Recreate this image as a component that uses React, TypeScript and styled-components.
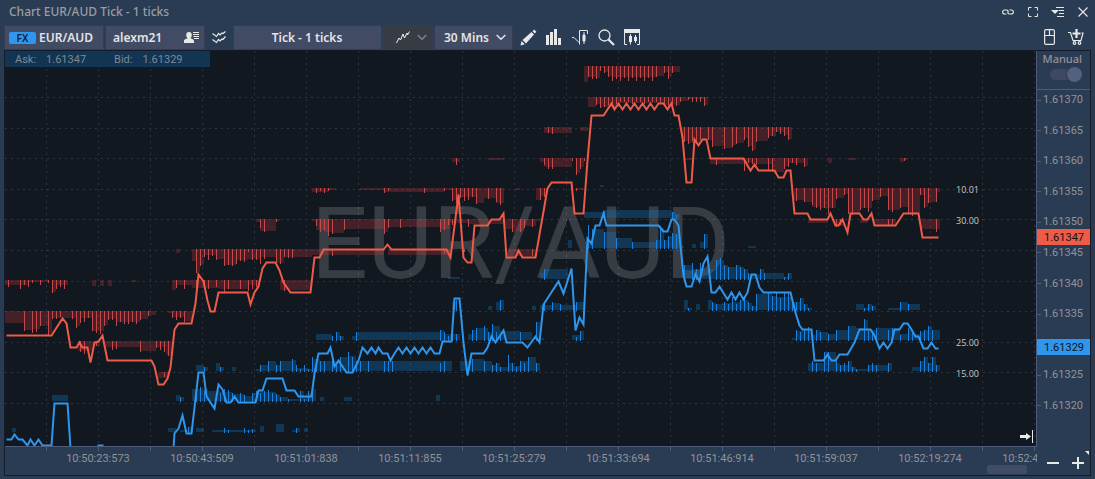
import React from "react";
import styled, { createGlobalStyle } from "styled-components";

const GlobalStyle = createGlobalStyle`
  *, *::before, *::after { box-sizing: border-box; }
  html, body, #root { height: 100%; margin: 0; }
  body {
    background: #2a3b54;
    color: #e4e4e4;
    font-family: "Noto Sans", "Open Sans", sans-serif;
    font-size: 12px;
    overflow: hidden;
  }
  button, select { font: inherit; color: inherit; }
`;

const ui = {
  panel: "#2a3b54",
  canvas: "#111820",
  control: "#424b64",
  controlEdge: "#353c54",
  axisLine: "#4f5b78",
  muted: "#929397",
  ask: "#ee5b47",
  bid: "#2e96ec",
};

/* ---------- depth bands: fills are "from-to:height", ticks are "x:height" ---------- */

type Band = { y: number; fills: string; ticks?: string };

const askBands: Band[] = [
  {
    y: 66,
    fills: "584-588:16 588-596:11 596-600:12 600-604:2 604-608:6 608-612:10 612-640:11 640-656:11 656-664:10 664-668:6 668-672:10 672-680:6",
    ticks: "588:11 592:13 596:13 600:5 604:7 608:11 612:15 616:13 620:15 624:12 628:15 632:12 636:15 640:12 644:15 648:12 652:15 656:11 664:7 668:13 672:7",
  },
  {
    y: 97,
    fills: "588-596:10 596-600:7 600-620:10 620-664:6 664-680:8 680-688:4 688-704:2 704-708:8",
    ticks: "596:8 600:11 604:10 608:8 612:7 616:7 620:5 624:5 628:5 632:7 636:5 640:5 644:7 648:5 652:5 656:5 660:5 664:7 668:9 672:7 676:9 680:5 688:3 692:5 696:5 700:5 704:9",
  },
  {
    y: 127,
    fills: "544-572:6 580-588:4 682-688:14 688-700:16 700-708:12 708-712:13 712-724:19 724-732:21 732-736:18 736-744:16 744-748:11 748-752:19 752-756:23 756-768:14 768-776:9 776-784:5 784-788:8 788-792:12",
    ticks: "548:6 552:7 684:15 688:17 692:14 696:14 700:13 708:13 712:20 724:22 732:20 736:17 744:13 748:20 752:24 756:15 768:11 772:9 776:5 780:7 784:9 788:13",
  },
  {
    y: 158,
    fills: "452-460:4 488-504:2 540-544:4 544-572:9 576-580:15 580-584:9 684-692:2 710-744:6 744-756:5 756-772:6 772-784:14 784-788:8 788-804:5 804-808:8 828-832:5 848-856:2 900-904:4 904-908:2",
    ticks: "456:7 544:7 548:11 552:11 572:3 576:17 580:11 584:3 716:7 744:13 748:5 752:6 756:7 768:12 772:14 784:11 788:9 792:5 796:7 804:9 904:3",
  },
  {
    y: 188,
    fills: "312-328:4 328-336:2 360-384:2 384-444:4 444-452:2 452-460:12 460-476:9 476-484:15 484-496:10 496-504:15 516-520:2 536-540:12 540-546:8 576-584:2 794-804:12 804-812:14 812-820:19 820-836:20 836-844:10 844-848:6 848-860:25 860-872:20 872-880:12 880-888:8 888-900:22 900-908:19 908-920:25 920-924:7 924-928:19 928-936:14 936-940:4",
    ticks: "316:5 320:3 324:5 328:3 384:5 388:3 424:5 444:3 452:13 456:15 460:10 464:13 468:12 472:9 476:16 488:11 496:14 500:17 540:12 544:9 576:3 796:13 804:14 812:17 816:20 820:22 824:20 828:26 832:20 836:11 844:7 848:26 852:27 860:22 864:20 868:24 872:13 880:9 888:22 892:24 900:20 908:25 912:28 920:7 924:20 928:15 936:14",
  },
  {
    y: 219,
    fills: "256-260:3 260-276:12 276-280:2 312-316:2 316-324:11 324-332:13 332-344:14 344-384:10 384-388:13 388-440:8 440-450:10 450-468:4 468-504:5 504-512:10 512-524:12 524-536:7 536-540:2 808-828:4 834-844:7 860-868:4 874-896:7 920-940:10",
    ticks: "260:9 264:13 276:3 316:7 320:13 324:11 328:17 332:15 344:11 384:15 388:9 400:9 440:13 444:11 448:6 452:6 468:8 504:7 512:13 520:13 524:9 532:8 836:8 840:6 888:6 892:6 936:13",
  },
  {
    y: 249,
    fills: "176-180:4 192-196:12 196-200:23 200-204:16 204-216:6 216-224:10 224-236:16 236-248:11 248-260:10 260-276:8 276-284:14 284-312:8 312-384:6 388-450:6 508-536:7",
    ticks: "196:24 200:17 204:8 208:11 212:7 216:11 224:17 228:16 232:17 236:15 240:12 244:13 248:3 252:11 256:11 260:15 264:10 276:13 280:15 284:8 288:9 292:9 332:7 444:5 464:3 532:7",
  },
  {
    y: 280,
    fills: "5-28:5 28-48:2 52-56:12 56-68:5 92-96:6 100-104:6 108-112:6 132-136:2 172-176:10 176-192:5 192-220:8 220-248:9 248-260:5 280-312:10",
    ticks: "8:7 20:9 24:5 28:7 32:3 40:5 48:3 52:13 56:9 60:7 64:9 176:8 184:9 196:9 204:5 208:9 216:7 224:12 228:9 240:9 248:11 252:9 256:7 284:11",
  },
  {
    y: 311,
    fills: "5-24:12 24-32:19 32-40:18 40-48:15 48-52:22 52-76:7 76-80:15 80-92:7 92-104:20 104-108:14 108-116:8 116-140:11 140-148:8 148-156:4 168-172:2 172-184:6 184-192:10",
    ticks: "24:20 32:22 36:21 40:15 48:24 52:8 56:8 60:6 72:8 76:17 80:12 84:11 88:7 92:20 96:22 100:23 104:15 108:9 112:9 116:15 120:11 124:13 128:13 132:11 136:13 140:9 148:5 172:7 176:9 180:7 184:11",
  },
  {
    y: 341,
    fills: "78-92:10 92-100:5 104-140:6 140-156:10 156-166:6 166-172:14",
    ticks: "80:11 84:13 96:5 112:9 116:8 140:11 156:7 160:9 164:11 168:15",
  },
  { y: 372, fills: "158-168:6", ticks: "164:5" },
];

const bidBands: Band[] = [
  { y: 187, fills: "600-604:2" },
  { y: 218, fills: "584-604:6 604-672:8 672-676:6 676-680:4", ticks: "604:8 672:7 676:4" },
  {
    y: 248,
    fills: "568-572:8 588-592:6 592-604:19 604-616:16 616-632:10 632-656:6 656-660:8 660-664:20 664-668:8 668-672:12 672-680:14 680-684:2 692-696:4 700-704:6 704-708:14 748-756:2",
    ticks: "588:24 592:20 604:17 616:11 632:7 656:9 660:23 664:9 668:13 672:16 676:15 704:15",
  },
  {
    y: 279,
    fills: "448-460:2 540-544:6 544-568:10 684-692:14 692-716:10 716-724:19 724-728:14 728-736:12 736-740:14 740-744:12 744-748:10 748-760:5 760-764:10 764-784:6 784-788:2 788-792:6",
    ticks: "544:11 684:15 692:17 696:11 700:17 716:20 720:22 724:15 728:13 736:15 740:13 744:11 748:7 760:11 764:7 784:3 788:7",
  },
  {
    y: 310,
    fills: "452-456:8 488-492:4 496-500:8 500-504:10 532-536:4 540-552:5 552-560:7 560-576:5 576-584:8 684-688:10 688-692:2 696-700:6 708-712:10 712-716:7 716-724:6 724-732:7 732-740:8 740-748:10 748-752:7 752-756:4 756-768:16 768-772:17 772-776:14 776-792:13 792-800:8 800-804:12 804-808:6 808-812:2 856-864:6 864-868:2 868-872:6 872-876:4 888-900:2 900-908:8 908-920:6",
    ticks: "456:11 500:11 544:7 552:9 560:7 576:9 688:3 712:9 716:7 724:9 728:7 732:14 736:7 740:11 744:13 748:9 752:5 756:17 768:19 772:15 776:19 780:13 784:19 788:19 792:13 796:9 800:13 804:7 808:3 864:3 868:7 872:5 900:9 908:7",
  },
  {
    y: 340,
    fills: "316-332:6 336-340:8 340-344:4 352-356:4 356-440:8 440-444:10 444-460:6 468-472:6 472-476:10 476-484:12 484-488:12 488-492:8 492-500:14 500-520:9 520-532:8 536-540:18 540-544:2 572-580:5 580-584:9 792-796:2 796-812:9 812-816:5 816-820:10 820-828:8 828-836:6 836-848:10 848-856:14 856-864:12 864-868:20 868-876:10 876-900:12 900-908:6 908-912:10 912-920:6 920-924:8 924-928:10 928-932:14 932-940:10",
    ticks: "332:5 336:9 340:5 356:9 440:11 444:9 448:5 452:11 456:7 472:11 476:13 484:15 488:9 492:17 496:9 500:5 520:9 536:19 576:4 580:10 796:11 800:9 804:11 808:14 816:11 820:9 828:7 836:11 848:15 864:22 868:10 872:9 876:13 888:11 892:13 900:6 908:13 912:10 920:10 924:11 928:15 932:11",
  },
  {
    y: 371,
    fills: "196-204:6 204-208:4 216-220:8 220-224:4 232-236:4 256-260:2 260-268:6 268-276:10 276-280:6 280-292:10 292-296:11 296-308:3 308-312:2 312-320:12 320-332:10 332-340:10 340-348:14 348-356:15 356-440:10 440-452:10 460-472:10 472-484:12 484-492:10 492-496:6 496-500:8 500-508:4 508-512:8 512-520:5 520-528:10 528-536:14 536-540:8 808-824:8 824-836:19 836-840:8 840-848:6 848-852:10 852-856:4 856-868:2 868-876:6 876-888:6 888-892:8 912-920:4 920-924:10 924-928:14 928-932:8 932-936:14 936-940:6",
    ticks: "204:5 220:5 260:7 268:11 276:7 280:11 292:13 296:7 300:3 304:7 308:3 312:15 316:13 320:11 324:11 332:13 336:9 340:15 348:20 352:15 356:11 360:11 368:11 384:11 388:11 392:11 440:9 444:11 472:13 484:11 492:7 496:9 500:5 508:17 512:9 516:5 520:11 524:9 528:15 536:9 812:11 816:9 824:20 828:20 836:11 840:7 844:9 848:11 852:5 856:3 868:7 872:9 876:7 888:9 920:11 924:15 928:9 932:15 936:7",
  },
  {
    y: 401,
    fills: "52-68:6 176-180:6 180-184:4 192-208:12 208-220:10 220-232:9 232-244:7 244-252:5 252-260:8 260-276:9 276-280:6 280-288:4 288-300:2 300-304:10 304-308:4 308-312:8 312-316:12 320-324:4 344-352:4 436-440:6",
    ticks: "180:5 196:14 200:15 204:11 220:9 224:13 228:12 232:9 240:9 244:7 252:9 256:11 260:9 264:11 268:12 272:9 276:8 280:5 288:3 300:11 304:3 308:11 312:13",
  },
  {
    y: 432,
    fills: "12-16:4 168-176:4 180-188:2 188-192:5 196-204:4 212-256:2 260-264:6 276-284:8 292-296:2 296-300:4 304-308:4",
    ticks: "188:6 224:5 228:3 244:5 248:3 252:4 296:5",
  },
];

const askLine =
  "6,335 51,335 62,318 66,323 70,347 76,347 79,342 82,347 87,347 90,362 94,342 98,341 102,335 107,360 151,360 154,366 158,384 163,384 167,378 170,367 174,329 178,323 191,323 195,303 198,274 203,281 207,300 210,311 214,311 218,292 247,292 250,304 254,292 258,286 262,268 266,262 275,262 279,270 283,282 290,292 310,292 314,257 319,257 323,249 383,249 387,244 391,249 446,249 450,257 458,194 463,257 467,262 471,262 474,225 487,225 491,219 499,219 503,213 506,257 515,257 518,250 522,257 535,257 547,188 551,182 571,182 574,213 583,213 587,160 591,115 603,115 607,109 611,103 614,109 618,103 622,109 626,103 630,109 634,103 638,109 642,103 646,109 650,103 654,109 658,103 663,103 667,109 671,103 674,115 678,115 682,137 686,182 691,182 694,139 698,145 702,139 706,139 710,158 743,158 750,170 754,164 758,170 774,170 778,177 783,177 786,170 790,170 794,213 807,213 810,219 827,219 830,213 835,225 838,225 842,219 847,232 850,213 859,213 863,219 867,219 871,213 874,225 895,225 903,213 918,213 922,237 938,237";
const bidLine =
  "6,439 11,439 14,434 18,439 22,439 27,445 30,439 34,445 38,439 42,445 51,445 54,403 67,403 70,447";
const bidLineRest =
  "173,447 174,433 178,428 182,415 186,433 191,433 198,372 203,372 206,396 210,402 214,408 218,384 222,389 226,402 230,402 234,396 238,402 255,402 258,390 262,390 266,378 282,378 286,390 294,390 298,396 311,396 314,373 318,353 327,353 330,347 334,366 338,360 342,366 346,372 352,372 358,360 362,347 367,353 371,347 375,353 378,347 382,353 387,353 390,360 394,353 398,347 402,353 406,347 410,353 414,347 418,353 422,347 426,353 430,347 434,353 439,353 442,341 451,341 454,298 459,298 463,342 467,375 471,353 483,353 487,347 491,336 495,342 503,330 506,342 522,342 527,347 535,336 539,342 543,304 558,281 563,293 571,268 575,330 579,317 583,324 587,238 591,243 595,225 599,225 603,213 606,225 658,225 663,231 667,231 671,219 674,219 678,225 683,275 686,286 691,286 695,274 699,281 703,263 707,256 711,292 715,292 719,286 727,299 731,292 735,299 739,292 743,299 747,292 751,274 755,274 759,287 763,292 790,292 795,312 799,325 802,329 811,329 814,360 823,360 827,354 831,360 835,360 839,354 847,354 854,342 859,329 870,329 874,335 879,348 883,342 887,348 891,342 894,329 899,329 903,323 907,323 911,329 915,336 918,336 923,348 927,348 931,342 935,348 938,348";

/* the current bid tag takes the place of the 1.61330 row's label */
const prices = [
  "1.61370", "1.61365", "1.61360", "1.61355", "1.61350", "1.61345",
  "1.61340", "1.61335", "", "1.61325", "1.61320",
];
const times = [
  "10:50:23:573", "10:50:43:509", "10:51:01:838", "10:51:11:855", "10:51:25:279",
  "10:51:33:694", "10:51:46:914", "10:51:59:037", "10:52:19:274", "10:52:41:118",
];
const gridX = Array.from({ length: 20 }, (_, i) => 46 + i * 52);
const gridY = [97, 128, 158, 189, 219, 250, 281, 311, 342, 372, 403];

/* ---------- styled parts ---------- */

const Window = styled.div`
  display: flex;
  flex-direction: column;
  height: 100%;
  min-height: 300px;
  background: ${ui.panel};
`;
const TitleBar = styled.header`
  display: flex;
  align-items: center;
  justify-content: space-between;
  height: 24px;
  padding: 0 4px 0 9px;
`;
const Title = styled.h1`
  margin: 0;
  font-size: 12px;
  font-weight: 500;
  line-height: 16px;
  color: #9a9da2;
`;
const WindowControls = styled.div`
  display: flex;
  gap: 9px;
`;
const IconButton = styled.button<{ $size?: number }>`
  display: grid;
  place-items: center;
  width: ${(p) => p.$size ?? 16}px;
  height: ${(p) => p.$size ?? 16}px;
  padding: 0;
  border: 0;
  background: none;
  color: #e8e8e8;
  svg { display: block; }
`;
const Toolbar = styled.div`
  display: flex;
  align-items: center;
  justify-content: space-between;
  height: 26px;
  padding: 0 10px 0 4px;
`;
const ToolGroup = styled.div<{ $gap: number }>`
  display: flex;
  align-items: center;
  gap: ${(p) => p.$gap}px;
`;
const Field = styled.button<{ $width: number; $dark?: boolean; $align?: string }>`
  display: flex;
  align-items: center;
  justify-content: ${(p) => p.$align ?? "space-between"};
  gap: 3px;
  width: ${(p) => p.$width}px;
  height: 25px;
  padding: 1px 5px 0 4px;
  border: 1px solid ${ui.controlEdge};
  background: ${(p) => (p.$dark ? "#373b44" : ui.control)};
  font-weight: 600;
  line-height: 16px;
  white-space: nowrap;
`;
const UserName = styled.span`
  padding-left: 3px;
`;
const FxBadge = styled.span`
  width: 27px;
  border-radius: 2px;
  background: ${ui.bid};
  color: #10243c;
  font-size: 10px;
  line-height: 12px;
  text-align: center;
`;
const SelectBox = styled.label`
  position: relative;
  display: flex;
  width: 79px;
  height: 25px;
  border: 1px solid ${ui.controlEdge};
  background: ${ui.control};
  svg { position: absolute; right: 6px; top: 8px; pointer-events: none; }
`;
const Select = styled.select`
  width: 100%;
  padding: 1px 9px 0;
  border: 0;
  appearance: none;
  background: none;
  font-weight: 600;
`;
const ChartFrame = styled.main`
  flex: 1;
  min-height: 0;
  display: grid;
  grid-template-columns: minmax(0, 1fr) 53px;
  grid-template-rows: minmax(0, 1fr) 28px;
  margin: 0 4px 3px;
  border: 1px solid #151b27;
`;
const Plot = styled.section`
  position: relative;
  overflow: hidden;
  background: ${ui.canvas};
  border-right: 1px solid ${ui.axisLine};
  border-bottom: 1px solid ${ui.axisLine};
`;
const PlotSvg = styled.svg`
  display: block;
  width: 1031px;
  height: 396px;
`;
const Quote = styled.div`
  position: absolute;
  top: 0;
  left: 0;
  display: flex;
  gap: 28px;
  width: 205px;
  height: 16px;
  padding-left: 10px;
  background: #123553;
  color: #7d8894;
  font: 11px/17px Roboto, sans-serif;
  span { display: flex; gap: 10px; }
`;
const JumpButton = styled(IconButton)`
  position: absolute;
  right: 1px;
  bottom: 2px;
`;
const PriceAxis = styled.aside`
  position: relative;
  display: flex;
  flex-direction: column;
  color: ${ui.muted};
  font: 11px/14px Roboto, sans-serif;
`;
const Scaling = styled.label`
  display: flex;
  flex-direction: column;
  align-items: flex-end;
  height: 39px;
  padding: 1px 8px 0 0;
  border-bottom: 1px solid ${ui.axisLine};
  font: 500 11px/14px "Noto Sans", sans-serif;
`;
const Toggle = styled.input`
  appearance: none;
  display: flex;
  align-items: center;
  justify-content: flex-end;
  width: 32px;
  height: 11px;
  margin: 3px 0 0;
  border-radius: 6px;
  background: #3f4863;
  &::before {
    content: "";
    width: 15px;
    height: 15px;
    flex: none;
    border-radius: 50%;
    background: #536080;
    box-shadow: 0 0 0 1px #313a52;
  }
`;
const PriceList = styled.ol`
  display: flex;
  flex-direction: column;
  justify-content: space-between;
  height: 320px;
  margin: 3px 0 0;
  padding: 0;
  list-style: none;
  li { display: flex; align-items: center; gap: 2px; height: 14px; }
  li::before { content: ""; width: 4px; height: 1px; background: ${ui.axisLine}; }
`;
const PriceTag = styled.output<{ $top: number; $color: string }>`
  position: absolute;
  top: ${(p) => p.$top}px;
  left: 0;
  right: 0;
  padding-left: 7px;
  background: ${(p) => p.$color};
  color: #10131c;
  line-height: 17px;
  height: 16px;
`;
const TimeAxis = styled.footer`
  position: relative;
  overflow: hidden;
`;
const TimeList = styled.ol`
  display: flex;
  margin: 0;
  padding: 0 0 0 41px;
  list-style: none;
  color: ${ui.muted};
  font: 11px/23px Roboto, sans-serif;
  background: repeating-linear-gradient(90deg, ${ui.axisLine} 0 1px, transparent 1px 52px) 41px 0 / 100% 4px no-repeat;
  li { flex: 0 0 104px; text-align: center; }
`;
const ScrollThumb = styled.div`
  position: absolute;
  right: 10px;
  bottom: 1px;
  width: 40px;
  height: 9px;
  border-radius: 2px;
  background: #424b64;
`;
const ZoomControls = styled.div`
  position: relative;
  display: flex;
  align-items: center;
  justify-content: space-between;
  padding: 4px 4px 0 8px;
  &::after {
    content: "";
    position: absolute;
    top: 4px;
    right: 1px;
    border: 2px solid transparent;
    border-top-color: #e8e8e8;
    border-right-color: #e8e8e8;
  }
`;

/* ---------- chart drawing ---------- */

function Bars({ bands, down, fill, tick }: { bands: Band[]; down?: boolean; fill: string; tick: string }) {
  return (
    <g shapeRendering="crispEdges">
      {bands.map((band) => (
        <g key={band.y}>
          {band.fills.split(" ").map((item) => {
            const [range, h] = item.split(":");
            const [from, to] = range.split("-").map(Number);
            const height = Number(h);
            return <rect key={item} x={from} y={down ? band.y : band.y - height} width={to - from} height={height} fill={fill} />;
          })}
          {(band.ticks ?? "").split(" ").filter(Boolean).map((item) => {
            const [x, height] = item.split(":").map(Number);
            return <rect key={item} x={x} y={down ? band.y : band.y + 1 - height} width={1} height={height} fill={tick} />;
          })}
        </g>
      ))}
    </g>
  );
}

function Trace({ points, color }: { points: string; color: string }) {
  return <polyline points={points} transform="translate(0.5 0.5)" fill="none" stroke={color} strokeWidth="2" strokeLinejoin="miter" />;
}

function Chart() {
  return (
    <PlotSvg viewBox="5 51 1031 396" role="img" aria-label="EUR/AUD tick chart">
      <g stroke="#2e343e" strokeDasharray="2 4" shapeRendering="crispEdges">
        {gridX.map((x) => <line key={x} x1={x + 0.5} x2={x + 0.5} y1="51" y2="446" />)}
        {gridY.map((y) => <line key={y} x1="5" x2="1036" y1={y + 0.5} y2={y + 0.5} />)}
      </g>
      <text x="311" y="278" fill="#fff" fillOpacity="0.16" fontFamily="Roboto, sans-serif" fontSize="100">EUR/AUD</text>
      <Bars bands={askBands} down fill="rgba(234, 62, 68, 0.24)" tick="#c4494b" />
      <Bars bands={bidBands} fill="rgba(20, 117, 190, 0.33)" tick="#1a80dd" />
      <Trace points={askLine} color={ui.ask} />
      <Trace points={bidLine} color={ui.bid} />
      <Trace points="97,445 103,445" color={ui.bid} />
      <Trace points={bidLineRest} color={ui.bid} />
      <g fill="#c8c8c8" fontFamily="'Open Sans', sans-serif" fontSize="9">
        <text x="956" y="193">10.01</text>
        <text x="956" y="224">30.00</text>
        <text x="956" y="346">25.00</text>
        <text x="956" y="377">15.00</text>
      </g>
    </PlotSvg>
  );
}

const Chevron = ({ color = "#e8e8e8" }) => (
  <svg width="10" height="7" viewBox="0 0 10 7" fill="none" stroke={color} strokeWidth="1.4"><path d="M.7.9 5 5.3 9.3.9" /></svg>
);

export default function App() {
  return (
    <Window>
      <GlobalStyle />
      <TitleBar>
        <Title>Chart EUR/AUD Tick - 1 ticks</Title>
        <WindowControls>
          <IconButton aria-label="Link">
            <svg width="12" height="8" viewBox="0 0 12 8" fill="none" stroke="currentColor" strokeWidth="1.1">
              <path d="M4.500 6H2.800C-.1 6-.1 2 2.800 2h1.500C6 2 6.600 3.200 6 4.200M7.500 2h1.700c2.900 0 2.900 4 0 4H7.700C6 6 5.400 4.800 6 3.800" />
            </svg>
          </IconButton>
          <IconButton aria-label="Maximize">
            <svg width="10" height="10" viewBox="0 0 10 10" fill="none" stroke="currentColor"><path d="M3.500.5H.5v3M6.500.5h3v3M9.500 6.500v3h-3M3.500 9.500h-3v-3" /></svg>
          </IconButton>
          <IconButton aria-label="Menu">
            <svg width="14" height="10" viewBox="0 0 14 10"><path d="M0 3h8L4 7z" fill="currentColor" /><path d="M5 .5h8M8 3.500h5M8 6.500h5M6 9.500h7" stroke="currentColor" /></svg>
          </IconButton>
          <IconButton aria-label="Close">
            <svg width="10" height="10" viewBox="0 0 10 10" fill="none" stroke="currentColor" strokeWidth="1.1"><path d="m.5.5 9 9m0-9-9 9" /></svg>
          </IconButton>
        </WindowControls>
      </TitleBar>

      <Toolbar>
        <ToolGroup $gap={6}>
          <ToolGroup $gap={1}>
            <Field $width={100} $align="flex-start">
              <FxBadge>FX</FxBadge>
              <span>EUR/AUD</span>
            </Field>
            <Field $width={100}>
              <UserName>alexm21</UserName>
              <svg width="15" height="11" viewBox="0 0 15 11" fill="#e8e8e8">
                <path d="M5 0c2 0 2.800 1.300 2.800 3 0 1.500-.7 2.500-1.300 3 .1.800 3.500.8 3.500 3v2H0V9c0-2.200 3.400-2.200 3.500-3-.6-.5-1.300-1.500-1.300-3C2.200 1.300 3 0 5 0z" />
                <path d="M9 .5h6M9 2.500h6M9.500 4.500H15M10 6.500h5" stroke="#e8e8e8" />
              </svg>
            </Field>
            <IconButton $size={26} aria-label="Indicators">
              <svg width="14" height="13" viewBox="0 0 14 13" fill="none" stroke="currentColor" strokeWidth="1.2">
                <path d="m.5 2.500 4 3 2-3 1.500 1.500 2-2 1 .5L13.500.5M.5 8.500l4 3 2-3L8 10l2-2 1 .5 2.500-3" />
              </svg>
            </IconButton>
            <Field $width={149} $align="center">Tick - 1 ticks</Field>
            <Field $width={50} $dark aria-label="Chart style">
              <svg width="22" height="13" viewBox="-8 0 22 13" fill="none" stroke="#f0f0f0">
                <path d="m.5 12 2.500-5 1.500 2L7 3l1.500 4L11 2l.5 2L13.500.5" />
              </svg>
              <Chevron color="#80838a" />
            </Field>
            <SelectBox>
              <Select aria-label="Time range" defaultValue="30">
                <option value="30">30 Mins</option>
                <option value="60">60 Mins</option>
              </Select>
              <Chevron />
            </SelectBox>
          </ToolGroup>
          <ToolGroup $gap={8}>
            <IconButton $size={18} aria-label="Draw">
              <svg width="17" height="17" viewBox="0 0 17 17" fill="currentColor"><path d="M.5 16.500 1.500 12 4.800 15.300zM2.500 11 11.500 3 14 5.500 6 14.500zM12.500 2.300 14.200.6l2.200 2.200-1.700 1.700z" /></svg>
            </IconButton>
            <IconButton $size={18} aria-label="Volume">
              <svg width="16" height="16" viewBox="0 0 16 16" fill="currentColor"><path d="M0 6h3v10H0zM4 3h3v13H4zM8 0h3v16H8zM12 9h3v7h-3z" /></svg>
            </IconButton>
            <IconButton $size={18} aria-label="Trade from chart">
              <svg width="16" height="16" viewBox="0 0 16 16" fill="none" stroke="currentColor"><path d="M0 8.500h2l5 5M7.500 15.500V1.500h8V5" /><path d="M11 6h2v6h-2zM12 3v12" fill="currentColor" /></svg>
            </IconButton>
            <IconButton $size={18} aria-label="Search">
              <svg width="17" height="17" viewBox="0 0 17 17" fill="none" stroke="currentColor"><circle cx="6.500" cy="6.500" r="5.500" strokeWidth="1.3" /><path d="m10.500 10.500 5.500 5.500" strokeWidth="2.200" /></svg>
            </IconButton>
            <IconButton $size={18} aria-label="Chart window">
              <svg width="16" height="16" viewBox="0 0 16 16" fill="none" stroke="currentColor"><path d="M0 0h16v4H0zM5 7h3v6H5zM10 8h3v4h-3z" fill="currentColor" stroke="none" /><path d="M.5 3v12.500H3M15.500 3v12.500H13M6.500 5v10.500M11.500 6v8" /></svg>
            </IconButton>
          </ToolGroup>
        </ToolGroup>
        <ToolGroup $gap={9}>
          <IconButton $size={18} aria-label="Mouse trading">
            <svg width="11" height="16" viewBox="0 0 11 16" fill="none" stroke="currentColor" strokeWidth="1.200"><rect x=".6" y=".6" width="9.800" height="14.800" rx="1.500" /><path d="M.5 6.500h10M5.500.5v6" /></svg>
          </IconButton>
          <IconButton $size={18} aria-label="New order">
            <svg width="16" height="16" viewBox="0 0 16 16" fill="none" stroke="currentColor" strokeWidth="1.200"><path d="M0 3.500h2.500l2.500 8h8l2-7.500h-1.500" /><path d="M8.500 0v9M4.500 4.500h8" strokeWidth="2.200" /><circle cx="6.500" cy="14" r="1.300" /><circle cx="11.500" cy="14" r="1.300" /></svg>
          </IconButton>
        </ToolGroup>
      </Toolbar>

      <ChartFrame>
        <Plot>
          <Chart />
          <Quote>
            <span><span>Ask:</span><span>1.61347</span></span>
            <span><span>Bid:</span><span>1.61329</span></span>
          </Quote>
          <JumpButton aria-label="Jump to latest">
            <svg width="14" height="13" viewBox="0 0 14 13" fill="#e8e8e8"><path d="M0 5h6V3l5 3.500L6 10V8H0zM12 0h1v13h-1z" /></svg>
          </JumpButton>
        </Plot>
        <PriceAxis>
          <Scaling>
            Manual
            <Toggle type="checkbox" role="switch" defaultChecked />
          </Scaling>
          <PriceList>
            {prices.map((price, i) => <li key={i}>{price}</li>)}
          </PriceList>
          <PriceTag $top={178} $color={ui.ask}>1.61347</PriceTag>
          <PriceTag $top={288} $color={ui.bid}>1.61329</PriceTag>
        </PriceAxis>
        <TimeAxis>
          <TimeList>
            {times.map((time) => <li key={time}>{time}</li>)}
          </TimeList>
          <ScrollThumb />
        </TimeAxis>
        <ZoomControls>
          <IconButton aria-label="Zoom out">
            <svg width="12" height="12" viewBox="0 0 12 12" fill="currentColor"><path d="M0 5h12v2H0z" /></svg>
          </IconButton>
          <IconButton aria-label="Zoom in">
            <svg width="12" height="12" viewBox="0 0 12 12" fill="currentColor"><path d="M0 5h5V0h2v5h5v2H7v5H5V7H0z" /></svg>
          </IconButton>
        </ZoomControls>
      </ChartFrame>
    </Window>
  );
}
